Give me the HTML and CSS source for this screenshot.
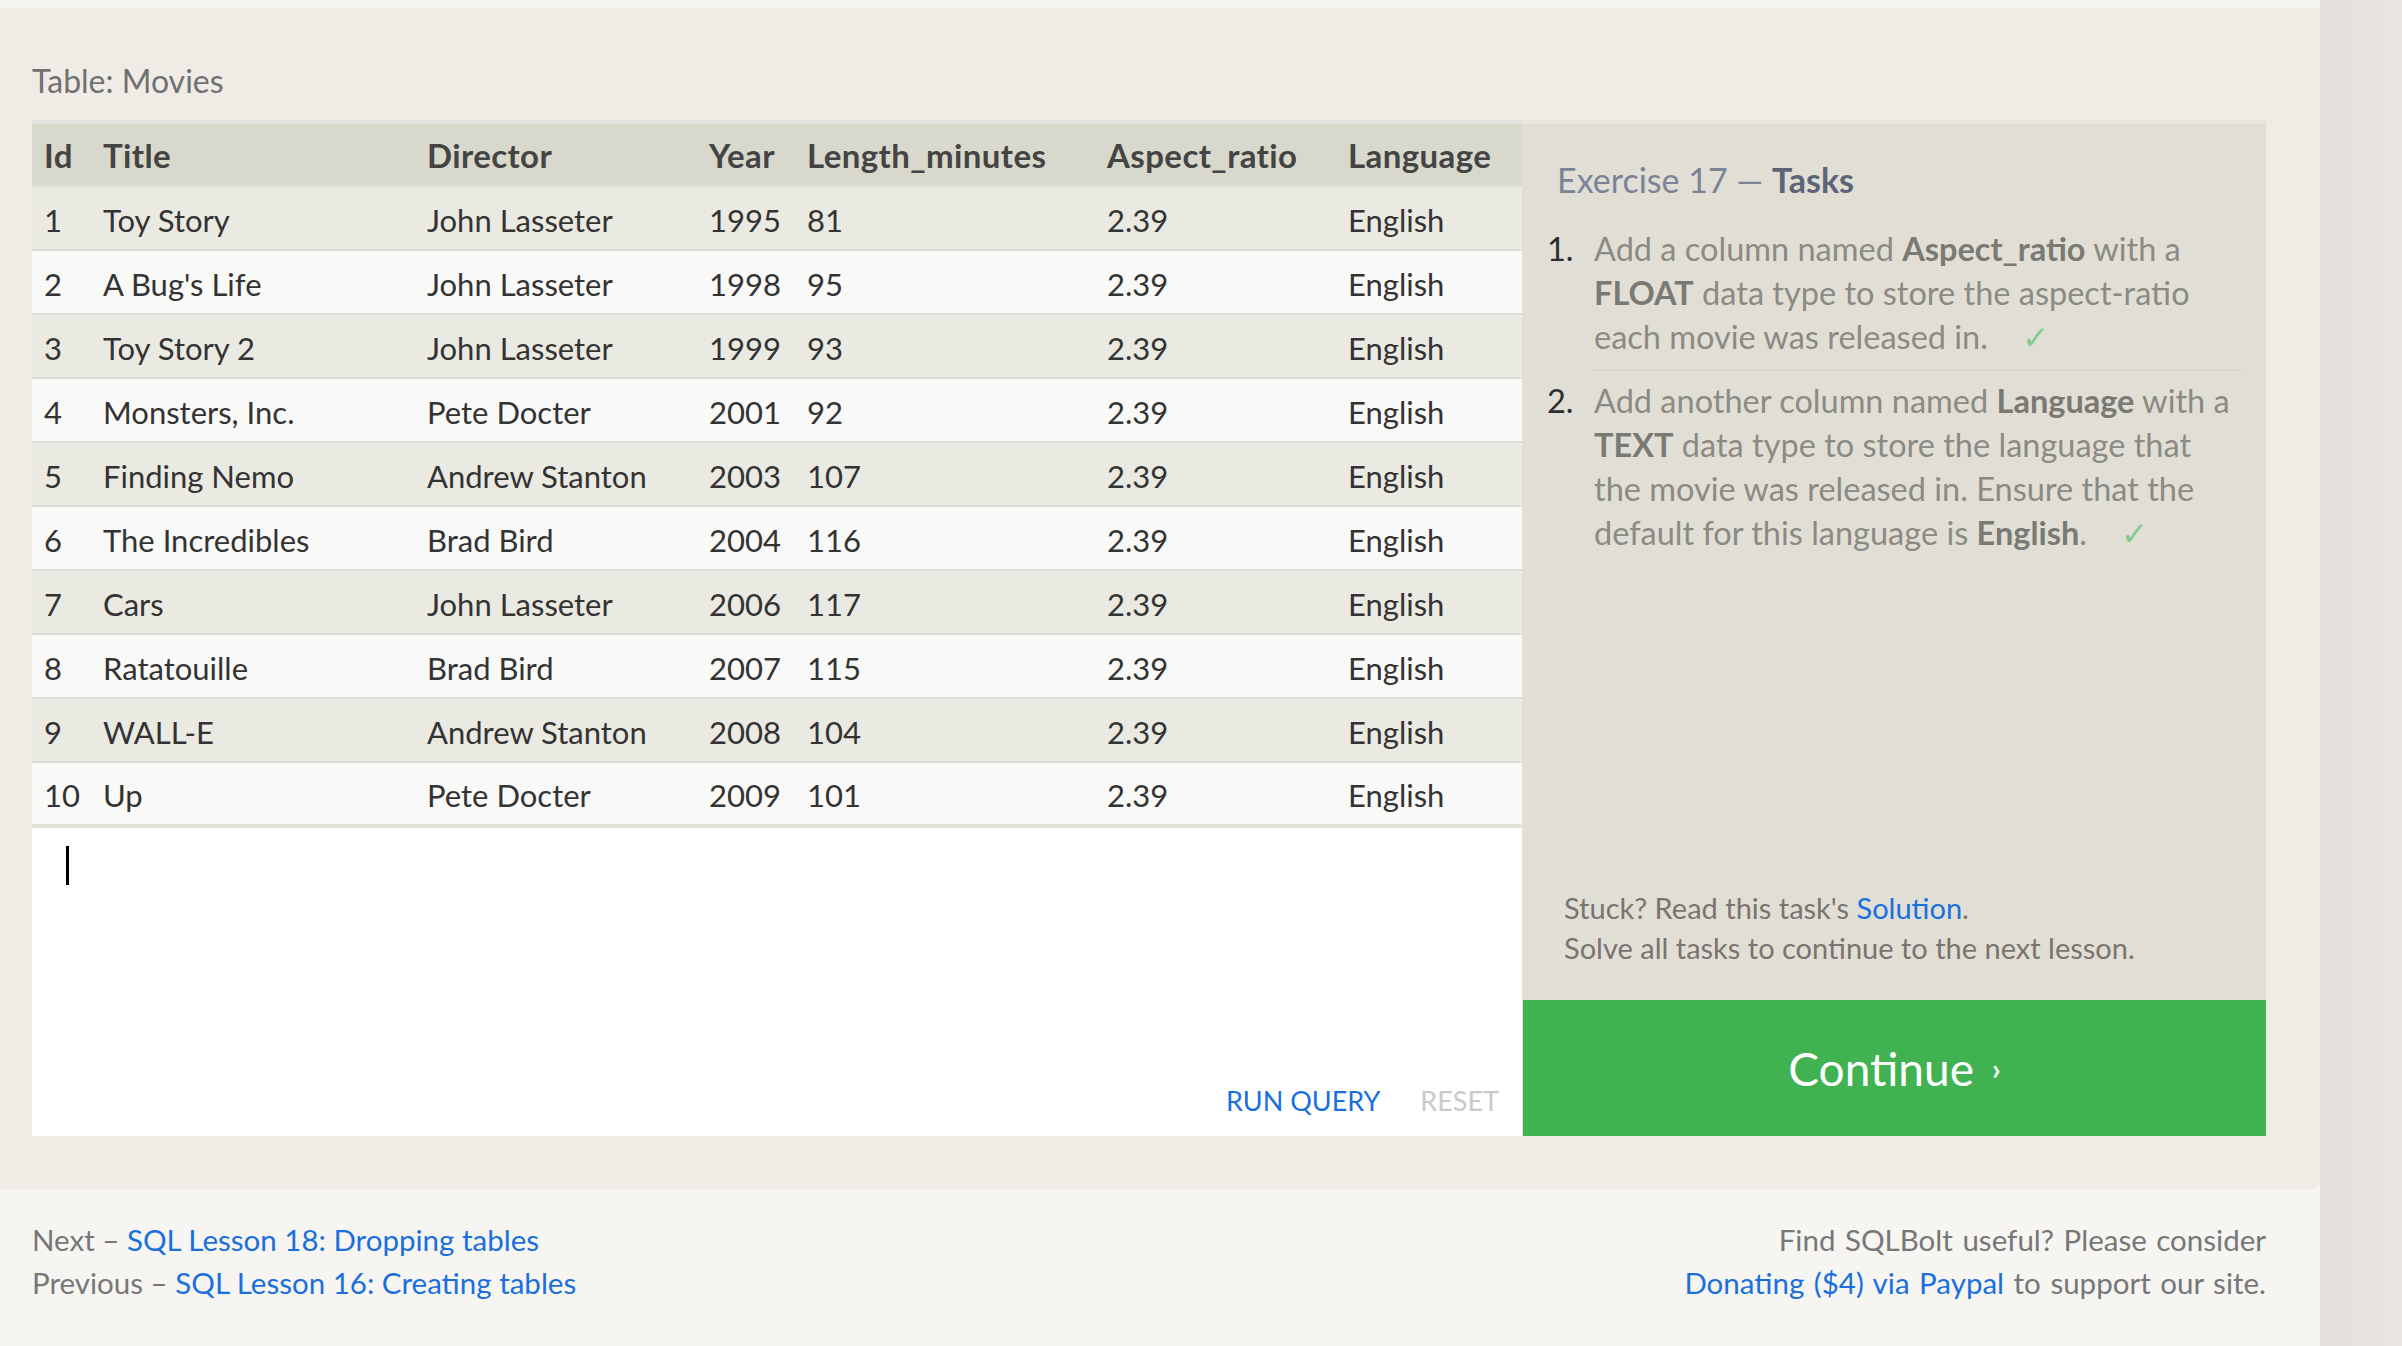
FILE: index.html
```html
<!DOCTYPE html>
<html lang="en">
<head>
<meta charset="utf-8">
<title>SQL Lesson 17</title>
<link rel="stylesheet" href="styles.css">
</head>
<body>
<div class="page">
  <div class="main-col">
    <div class="top-band"></div>
    <section class="content">
      <div class="table-title">Table: Movies</div>
      <div class="workspace">
        <div class="left">
          <table class="results">
            <colgroup>
              <col class="c-id"><col class="c-title"><col class="c-dir"><col class="c-year"><col class="c-len"><col class="c-asp"><col class="c-lang">
            </colgroup>
            <thead>
              <tr><th>Id</th><th>Title</th><th>Director</th><th>Year</th><th>Length_minutes</th><th>Aspect_ratio</th><th>Language</th></tr>
            </thead>
            <tbody>
              <tr><td>1</td><td>Toy Story</td><td>John Lasseter</td><td>1995</td><td>81</td><td>2.39</td><td>English</td></tr>
              <tr><td>2</td><td>A Bug's Life</td><td>John Lasseter</td><td>1998</td><td>95</td><td>2.39</td><td>English</td></tr>
              <tr><td>3</td><td>Toy Story 2</td><td>John Lasseter</td><td>1999</td><td>93</td><td>2.39</td><td>English</td></tr>
              <tr><td>4</td><td>Monsters, Inc.</td><td>Pete Docter</td><td>2001</td><td>92</td><td>2.39</td><td>English</td></tr>
              <tr><td>5</td><td>Finding Nemo</td><td>Andrew Stanton</td><td>2003</td><td>107</td><td>2.39</td><td>English</td></tr>
              <tr><td>6</td><td>The Incredibles</td><td>Brad Bird</td><td>2004</td><td>116</td><td>2.39</td><td>English</td></tr>
              <tr><td>7</td><td>Cars</td><td>John Lasseter</td><td>2006</td><td>117</td><td>2.39</td><td>English</td></tr>
              <tr><td>8</td><td>Ratatouille</td><td>Brad Bird</td><td>2007</td><td>115</td><td>2.39</td><td>English</td></tr>
              <tr><td>9</td><td>WALL-E</td><td>Andrew Stanton</td><td>2008</td><td>104</td><td>2.39</td><td>English</td></tr>
              <tr><td>10</td><td>Up</td><td>Pete Docter</td><td>2009</td><td>101</td><td>2.39</td><td>English</td></tr>
            </tbody>
          </table>
          <div class="editor">
            <div class="editor-text"><span class="caret"></span></div>
            <div class="editor-actions">
              <span class="run">RUN QUERY</span>
              <span class="reset">RESET</span>
            </div>
          </div>
        </div>
        <aside class="tasks">
          <div class="tasks-body">
            <h3 class="tasks-heading">Exercise 17 — <span class="strong">Tasks</span></h3>
            <ol class="task-list">
              <li><span class="num">1.</span><span class="task-text">Add a column named <b>Aspect_ratio</b> with a <b>FLOAT</b> data type to store the aspect-ratio each movie was released in.<span class="check">✓</span></span></li>
              <li><span class="num">2.</span><span class="task-text">Add another column named <b>Language</b> with a <b>TEXT</b> data type to store the language that the movie was released in. Ensure that the default for this language is <b>English</b>.<span class="check">✓</span></span></li>
            </ol>
          </div>
          <div class="tasks-help">
            <div>Stuck? Read this task's <a href="#">Solution</a>.</div>
            <div>Solve all tasks to continue to the next lesson.</div>
          </div>
          <a class="continue" href="#">Continue <span class="chev">›</span></a>
        </aside>
      </div>
    </section>
    <footer class="footer">
      <div class="footer-left">
        <div>Next – <a href="#">SQL Lesson 18: Dropping tables</a></div>
        <div>Previous – <a href="#">SQL Lesson 16: Creating tables</a></div>
      </div>
      <div class="footer-right">
        <div>Find SQLBolt useful? Please consider</div>
        <div><a href="#">Donating ($4) via Paypal</a> to support our site.</div>
      </div>
    </footer>
  </div>
  <div class="side-strip"></div>
</div>
</body>
</html>
```
FILE: styles.css
```css
* { box-sizing: border-box; }
html, body { margin: 0; padding: 0; }
body {
  font-family: Lato, "Open Sans", "DejaVu Sans", sans-serif;
  background: #f6f5f2;
  color: #333;
}
a { color: #1a6fde; text-decoration: none; }

.page {
  display: flex;
  width: 2402px;
  min-height: 1346px;
}
.main-col {
  width: 2320px;
  background: #f6f5f2;
  display: flex;
  flex-direction: column;
}
.side-strip {
  flex: 1;
  background: linear-gradient(90deg, #e3dfdc, #e8e5e2);
}
.top-band {
  height: 8px;
  background: #f6f5f1;
}
.content {
  background: #efece5;
  border-bottom-right-radius: 10px;
  padding: 0 54px 0 32px;
  height: 1182px;
}
.table-title {
  font-size: 32px;
  color: #707070;
  line-height: 40px;
  padding-top: 53px;
  height: 112px;
}

.workspace {
  display: flex;
  align-items: stretch;
}
.left {
  width: 1490px;
  display: flex;
  flex-direction: column;
}

.results {
  width: 1490px;
  border-collapse: collapse;
  table-layout: fixed;
  border-top: 4px solid #e4e3dd;
  font-size: 31px;
}
.c-id { width: 59px; }
.c-title { width: 324px; }
.c-dir { width: 282px; }
.c-year { width: 98px; }
.c-len { width: 300px; }
.c-asp { width: 241px; }
.c-lang { width: 186px; }

.results th,
.results td {
  text-align: left;
  padding: 0 0 0 12px;
  white-space: nowrap;
}
.results th {
  background: #d9d8cc;
  color: #444;
  font-weight: 700;
  font-size: 33px;
  letter-spacing: 0.4px;
  height: 64px;
  border-bottom: 2px solid #e1e0da;
}
.results td {
  height: 64px;
  color: #333;
  border-bottom: 2px solid #dddcd6;
  padding-top: 3px;
}
.results tbody tr:nth-child(odd) td { background: #eae9e2; }
.results tbody tr:nth-child(even) td { background: #f9f9f8; }
.results tbody tr:last-child td { border-bottom: 4px solid #e2e1dc; }

.editor {
  background: #fff;
  height: 308px;
  display: flex;
  flex-direction: column;
  justify-content: space-between;
}
.editor-text {
  padding: 18px 0 0 34px;
}
.caret {
  display: block;
  width: 3px;
  height: 39px;
  background: #000;
}
.editor-actions {
  display: flex;
  justify-content: flex-end;
  gap: 40px;
  padding: 0 23px 17px 0;
  font-size: 27px;
  line-height: 36px;
}
.run { color: #1a6fde; }
.reset { color: #c9c9c9; }

.tasks {
  width: 744px;
  background: #e1dfd5;
  border-top: 4px solid #e6e5df;
  display: flex;
  flex-direction: column;
}
.tasks-body {
  padding: 32px 24px 0 25px;
}
.tasks-heading {
  margin: 0 0 23px 10px;
  font-size: 34px;
  font-weight: 400;
  line-height: 48px;
  color: #7b8495;
}
.tasks-heading .strong {
  color: #5c6577;
  font-weight: 700;
}
.task-list {
  list-style: none;
  margin: 0;
  padding: 0;
  font-size: 32.5px;
  line-height: 44px;
}
.task-list li {
  display: flex;
  padding-bottom: 10px;
}
.num {
  width: 47px;
  flex: none;
  color: #2e2e2e;
}
.task-list li + li .task-text {
  border-top: 2px solid #d8d6cc;
  padding-top: 8px;
}
.task-list li + li .num {
  padding-top: 10px;
}
.task-text { color: #8b8a84; }
.task-text b { color: #7a7974; font-weight: 700; }
.check {
  color: #84c98f;
  margin-left: 34px;
}
.tasks-help {
  margin-top: auto;
  padding: 0 20px 32px 42px;
  font-size: 29px;
  line-height: 40px;
  color: #7a7470;
}
.continue {
  display: flex;
  align-items: center;
  justify-content: center;
  gap: 18px;
  height: 136px;
  margin-left: 1px;
  background: #40b252;
  color: #fff;
  font-size: 46px;
}
.continue .chev {
  font-size: 30px;
  font-weight: 700;
}

.footer {
  flex: 1;
  display: flex;
  justify-content: space-between;
  padding: 28px 54px 0 32px;
  font-size: 29.5px;
  line-height: 43px;
  color: #777;
}
.footer-right { text-align: right; word-spacing: 2px; }
```
